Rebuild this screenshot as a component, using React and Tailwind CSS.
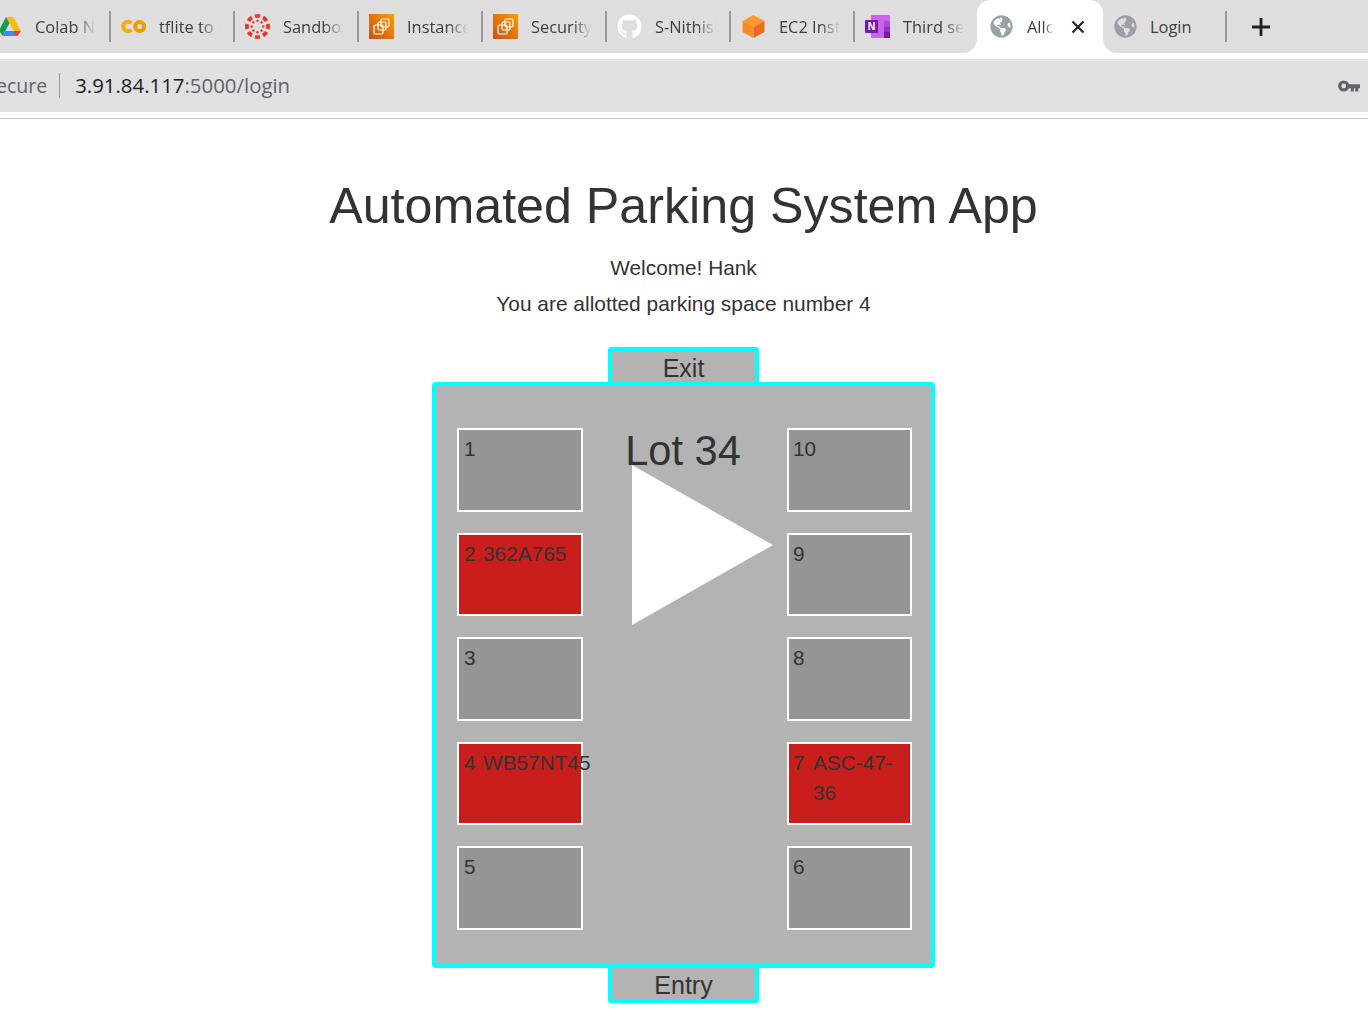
import React from 'react';
import { FaGithub, FaGlobeAmericas } from 'react-icons/fa';

const DriveIcon = () => (
  <svg width="25" height="25" viewBox="0 0 25 25">
    <path d="M9 3h7l8 14h-7z" fill="#fbbc04" />
    <path d="M9 3l3.500 6.200L5.600 22 2 16.500z" fill="#0f9d58" />
    <path d="M8.500 17H18l2 5H5.600z" fill="#4285f4" />
    <path d="M17 17h7l-3.500 5h-1z" fill="#ea4335" />
  </svg>
);

const ColabIcon = () => (
  <svg width="25" height="25" viewBox="0 0 25 25" fill="none">
    <path d="M10.300 9.200a4.700 4.700 0 1 0 0 6.600" stroke="#f9ab00" strokeWidth="4" />
    <circle cx="18.700" cy="12.500" r="4.500" stroke="#ef9b00" strokeWidth="4" />
  </svg>
);

const CanvasIcon = () => {
  const spokes = [0, 45, 90, 135, 180, 225, 270, 315];
  return (
    <svg width="25" height="25" viewBox="0 0 25 25">
      {spokes.map((a) => (
        <g key={a} transform={`rotate(${a} 12.5 12.5)`}>
          <path d="M9.500.4a12 12 0 0 1 6 0l-1 3.700a8.500 8.500 0 0 0-4 0z" fill="#e8362f" />
          <circle cx="12.500" cy="6.700" r="1.250" fill="#e8362f" />
        </g>
      ))}
    </svg>
  );
};

const AwsIcon = () => (
  <svg width="25" height="25" viewBox="0 0 25 25" fill="none">
    <defs>
      <linearGradient id="aws" x1="0" y1="1" x2="1" y2="0">
        <stop offset="0" stopColor="#c8511b" />
        <stop offset="1" stopColor="#ff9900" />
      </linearGradient>
    </defs>
    <rect width="25" height="25" fill="url(#aws)" />
    <rect x="5" y="11" width="9" height="9" rx="1.500" stroke="#fff" strokeWidth="1.200" />
    <rect x="9" y="8" width="8" height="8" rx="1.500" stroke="#fff" strokeWidth="1.200" />
    <rect x="12" y="5" width="8" height="8" rx="1.500" stroke="#fff" strokeWidth="1.200" />
  </svg>
);

const CubeIcon = () => (
  <svg width="25" height="25" viewBox="0 0 25 25">
    <path d="M12.500 1l11 6-11 6-11-6z" fill="#ff9a2a" />
    <path d="M1.500 7l11 6v11l-11-6z" fill="#f68a2c" />
    <path d="M23.500 7l-11 6v11l11-6z" fill="#ea6a24" />
  </svg>
);

const OneNoteIcon = () => (
  <svg width="25" height="25" viewBox="0 0 25 25">
    <rect x="6" y="1" width="19" height="23" rx="1" fill="#ca64ea" />
    <rect x="19" y="7" width="6" height="5.500" fill="#ae4bd5" />
    <rect x="19" y="12.500" width="6" height="5.500" fill="#9332bf" />
    <rect x="19" y="18" width="6" height="6" fill="#7719aa" />
    <rect x="0" y="6" width="13" height="13" rx="1" fill="#7719aa" />
    <text x="6.500" y="16.200" textAnchor="middle" fontSize="10.500" fontWeight="700" fontFamily="'Liberation Sans', sans-serif" fill="#fff">N</text>
  </svg>
);

const KeyIcon = () => (
  <svg width="22" height="12" viewBox="0 0 22 12" fill="none">
    <circle cx="5.700" cy="6" r="4" stroke="#5f6368" strokeWidth="3.200" />
    <path d="M9 4.300h13v4h-1.800v3.200h-3V8.300h-1.400v3.200h-3V8.300H9z" fill="#5f6368" />
  </svg>
);

const tabs = [
  { title: 'Colab Notebook', icon: <DriveIcon /> },
  { title: 'tflite to android', icon: <ColabIcon /> },
  { title: 'Sandbox', icon: <CanvasIcon /> },
  { title: 'Instances', icon: <AwsIcon /> },
  { title: 'SecurityGroups', icon: <AwsIcon /> },
  { title: 'S-Nithish', icon: <FaGithub size={25} color="#fff" /> },
  { title: 'EC2 Instances', icon: <CubeIcon /> },
  { title: 'Third semester', icon: <OneNoteIcon /> },
];

const Tab = ({ title, icon, first }) => (
  <div className="w-[124px] h-[53px] shrink-0 flex items-center relative">
    {!first && <div className="absolute left-0 top-[11px] w-[2px] h-[31px] bg-[#9a9a9a]" />}
    <div className="ml-[12px] w-[25px] h-[25px] shrink-0 flex items-center justify-center">{icon}</div>
    <div className="ml-[13px] mt-[1px] w-[61px] overflow-hidden whitespace-nowrap text-[16.4px] text-[#3c4043] [mask-image:linear-gradient(to_right,black_68%,transparent)]">
      {title}
    </div>
  </div>
);

const Slot = ({ num, plate, taken, wide }) => (
  <div
    className={`h-[83.6px] border-2 border-white pr-[4px] py-[4px] flex text-[20.8px] leading-[30px] text-[#333] ${
      wide ? 'w-[125px] pl-[4px]' : 'w-[126px] pl-[5px]'
    } ${taken ? 'bg-[#c91e1c]' : 'bg-[#959595]'}`}
  >
    <span className={`shrink-0 ${wide ? 'w-[20px]' : 'w-[19px]'}`}>{num}</span>
    {plate && <span className="min-w-0">{plate}</span>}
  </div>
);

const App = () => {
  return (
    <div className="w-[1368px] h-[1026px] overflow-hidden bg-white font-['Liberation_Sans',Arial,sans-serif]">
      {/* browser chrome */}
      <div className="h-[53px] bg-[#dedede] flex items-center -ml-[15px] font-['Open_Sans','Noto_Sans',sans-serif]">
        {tabs.map((t, i) => (
          <Tab key={t.title} title={t.title} icon={t.icon} first={i === 0} />
        ))}
        <div className="w-[126px] h-[53px] shrink-0 bg-white rounded-t-[14px] flex items-center relative">
          <div className="absolute bottom-0 -left-[14px] w-[14px] h-[14px] bg-white">
            <div className="w-full h-full bg-[#dedede] rounded-br-[14px]" />
          </div>
          <div className="absolute bottom-0 -right-[14px] w-[14px] h-[14px] bg-white">
            <div className="w-full h-full bg-[#dedede] rounded-bl-[14px]" />
          </div>
          <FaGlobeAmericas size={23} color="#9aa0a6" className="ml-[13px]" />
          <span className="ml-[14px] mt-[1px] w-[27px] overflow-hidden whitespace-nowrap text-[16.4px] text-[#3c4043] [mask-image:linear-gradient(to_right,black_65%,transparent)]">
            Allotment
          </span>
          <svg className="ml-[17px]" width="14" height="14" viewBox="0 0 14 14" fill="none">
            <path d="M1.500 1.500l11 11M12.500 1.500l-11 11" stroke="#202124" strokeWidth="2.200" />
          </svg>
        </div>
        <div className="w-[124px] h-[53px] shrink-0 flex items-center relative">
          <FaGlobeAmericas size={23} color="#9aa0a6" className="ml-[11px]" />
          <span className="ml-[13px] mt-[1px] text-[16.4px] text-[#3c4043]">Login</span>
          <div className="absolute right-0 top-[11px] w-[2px] h-[31px] bg-[#9a9a9a]" />
        </div>
        <svg className="ml-[24px]" width="20" height="20" viewBox="0 0 20 20" fill="none">
          <path d="M10 1v18M1 10h18" stroke="#202124" strokeWidth="2.800" />
        </svg>
      </div>

      <div className="mt-[6px] h-[53px] bg-[#e0e0e0] flex items-center font-['Open_Sans','Noto_Sans',sans-serif] text-[20.4px]">
        <span className="text-[#5f6368] text-[19.5px] -ml-[4px]">ecure</span>
        <div className="ml-[12px] w-px h-[25px] bg-[#9a9a9a]" />
        <div className="ml-[15px] whitespace-nowrap">
          <span className="text-[#202124]">3.91.84.117</span>
          <span className="text-[#5f6368]">:5000/login</span>
        </div>
        <div className="ml-auto mr-[8px]">
          <KeyIcon />
        </div>
      </div>
      <div className="mt-[6px] h-px bg-[#cccccc]" />

      {/* page */}
      <div className="pr-px flex flex-col items-center text-[#333]">
        <h1 className="mt-[54px] text-[50.2px] leading-[66px] whitespace-nowrap">Automated Parking System App</h1>
        <p className="mt-[15px] text-[20.8px] leading-[28px]">Welcome! Hank</p>
        <p className="mt-[8px] text-[20.9px] leading-[28px]">You are allotted parking space number 4</p>

        <div className="mt-[29px] w-[151px] h-[38px] -mb-[3px] bg-[#b3b3b3] border-4 border-b-0 border-[#00ffff] rounded-t-[4px] flex items-start justify-center text-[25px] leading-[32px] pt-[1px]">
          Exit
        </div>

        <div className="w-[503px] h-[586px] relative z-10 bg-[#b3b3b3] border-4 border-[#00ffff] rounded-[4px] pt-[42.1px] pl-[21px] pr-[19px] flex justify-between">
          <div className="flex flex-col gap-[20.9px]">
            <Slot num="1" />
            <Slot num="2" plate="362A765" taken />
            <Slot num="3" />
            <Slot num="4" plate={<span className="whitespace-nowrap">WB57NT45</span>} taken />
            <Slot num="5" />
          </div>
          <div className="mr-[4px] flex flex-col items-center">
            <div className="text-[41.6px] leading-[48px] -mt-[1px] whitespace-nowrap">Lot 34</div>
            <svg className="-mt-[10px] ml-[39px]" width="141" height="160" viewBox="0 0 141 160">
              <path d="M0 0L141 80L0 160z" fill="#fff" />
            </svg>
          </div>
          <div className="flex flex-col gap-[20.9px]">
            <Slot num="10" wide />
            <Slot num="9" wide />
            <Slot num="8" wide />
            <Slot num="7" plate="ASC-47-36" taken wide />
            <Slot num="6" wide />
          </div>
        </div>

        <div className="w-[151px] h-[38px] -mt-[3px] bg-[#b3b3b3] border-4 border-t-0 border-[#00ffff] rounded-b-[4px] flex items-start justify-center text-[25px] leading-[32px] pt-[4px]">
          Entry
        </div>
      </div>
    </div>
  );
};

export default App;
